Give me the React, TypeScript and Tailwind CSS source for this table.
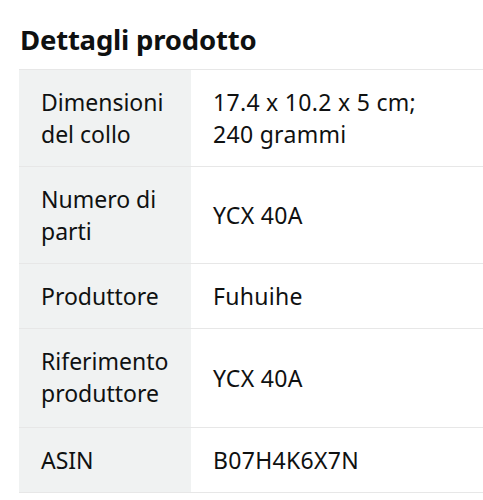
import React from "react";

const rows: { label: string[]; value: string[]; extra?: string }[] = [
  { label: ["Dimensioni", "del collo"], value: ["17.4 x 10.2 x 5 cm;", "240 grammi"] },
  { label: ["Numero di", "parti"], value: ["YCX 40A"] },
  { label: ["Produttore"], value: ["Fuhuihe"] },
  { label: ["Riferimento", "produttore"], value: ["YCX 40A"], extra: "pb-[18px]" },
  { label: ["ASIN"], value: ["B07H4K6X7N"] },
];

export default function App() {
  return (
    <div className="w-[483px] h-[500px] bg-white overflow-hidden text-[#0f1111]" style={{ fontFamily: '"Noto Sans", "Open Sans", sans-serif' }}>
      <h2 className="pl-[20px] pt-[22px] text-[27.5px] font-bold leading-[36px] tracking-[-0.2px]">Dettagli prodotto</h2>
      <div className="ml-[19px] mt-[11px] border-t border-[#e7e7e7]">
        {rows.map((r, i) => (
          <div key={i} className="flex border-b border-[#e7e7e7]">
            <div className={`w-[172px] shrink-0 bg-[#f0f2f2] pl-[22px] pr-1 pt-4 ${r.extra ?? "pb-4"} text-[23px] leading-[32px]`}>
              {r.label.map((l, j) => (
                <div key={j} className="whitespace-nowrap">{l}</div>
              ))}
            </div>
            <div className="flex-1 flex flex-col justify-center pl-[22px] py-4 text-[23px] leading-[32px] tracking-[0.3px]">
              {r.value.map((v, j) => (
                <div key={j}>{v}</div>
              ))}
            </div>
          </div>
        ))}
      </div>
    </div>
  );
}
